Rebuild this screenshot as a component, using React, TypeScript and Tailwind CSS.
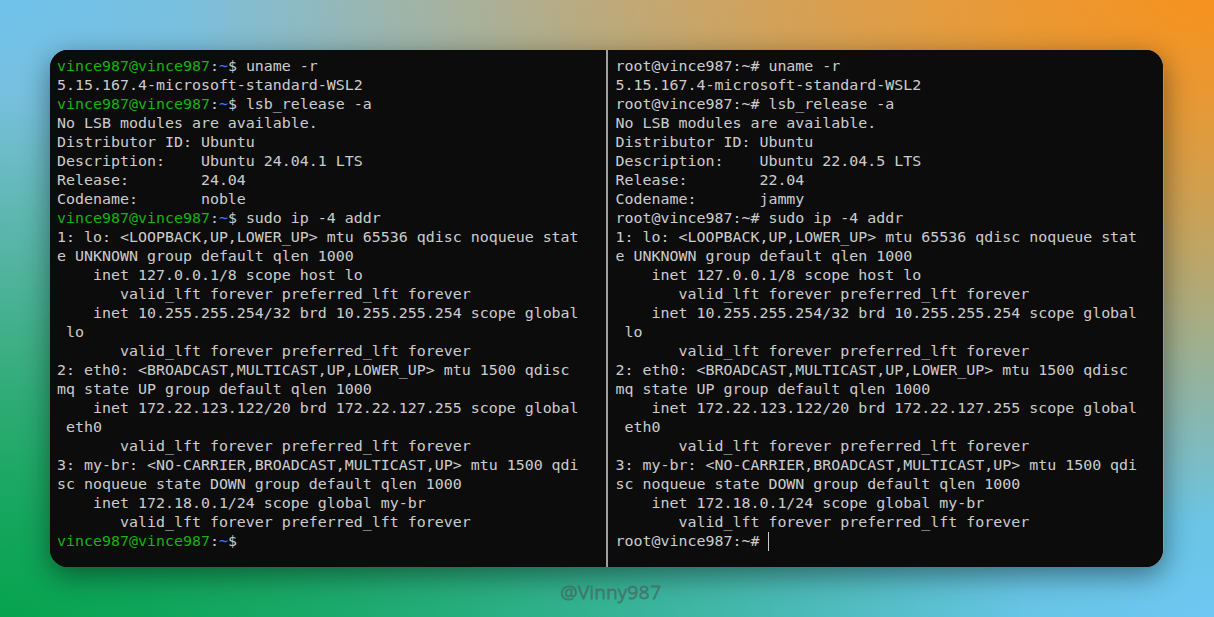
import React from "react";

type Seg = { t: string; c?: string };
type Line = Seg[];

const G = "text-[#16b30f]";
const B = "text-[#3b78ff]";

const userPrompt = (cmd: string): Line => [
  { t: "vince987@vince987", c: G },
  { t: ":" },
  { t: "~", c: B },
  { t: "$" + (cmd ? " " + cmd : "") },
];
const rootPrompt = (cmd: string): Line => [{ t: "root@vince987:~# " + cmd }];

const body = (ver: string, rel: string, code: string): Line[] =>
  [
    "No LSB modules are available.",
    "Distributor ID: Ubuntu",
    "Description:    Ubuntu " + ver,
    "Release:        " + rel,
    "Codename:       " + code,
  ].map((t) => [{ t }]);

const ipOut: Line[] = [
  "1: lo: <LOOPBACK,UP,LOWER_UP> mtu 65536 qdisc noqueue stat",
  "e UNKNOWN group default qlen 1000",
  "    inet 127.0.0.1/8 scope host lo",
  "       valid_lft forever preferred_lft forever",
  "    inet 10.255.255.254/32 brd 10.255.255.254 scope global",
  " lo",
  "       valid_lft forever preferred_lft forever",
  "2: eth0: <BROADCAST,MULTICAST,UP,LOWER_UP> mtu 1500 qdisc",
  "mq state UP group default qlen 1000",
  "    inet 172.22.123.122/20 brd 172.22.127.255 scope global",
  " eth0",
  "       valid_lft forever preferred_lft forever",
  "3: my-br: <NO-CARRIER,BROADCAST,MULTICAST,UP> mtu 1500 qdi",
  "sc noqueue state DOWN group default qlen 1000",
  "    inet 172.18.0.1/24 scope global my-br",
  "       valid_lft forever preferred_lft forever",
].map((t) => [{ t }]);

const leftLines: Line[] = [
  userPrompt("uname -r"),
  [{ t: "5.15.167.4-microsoft-standard-WSL2" }],
  userPrompt("lsb_release -a"),
  ...body("24.04.1 LTS", "24.04", "noble"),
  userPrompt("sudo ip -4 addr"),
  ...ipOut,
  userPrompt(""),
];

const rightLines: Line[] = [
  rootPrompt("uname -r"),
  [{ t: "5.15.167.4-microsoft-standard-WSL2" }],
  rootPrompt("lsb_release -a"),
  ...body("22.04.5 LTS", "22.04", "jammy"),
  rootPrompt("sudo ip -4 addr"),
  ...ipOut,
];

function Pane({ lines, cursor, pl }: { lines: Line[]; cursor?: boolean; pl: string }) {
  return (
    <div className={`flex-1 min-w-0 bg-[#0c0c0c] pt-[7px] ${pl}`}>
      {lines.map((l, i) => (
        <div key={i} className="whitespace-pre h-[19px] leading-[19px]">
          {l.map((s, j) => (
            <span key={j} className={s.c}>
              {s.t}
            </span>
          ))}
        </div>
      ))}
      {cursor && (
        <div className="whitespace-pre h-[19px] leading-[19px] flex items-center">
          <span>{"root@vince987:~# "}</span>
          <span className="inline-block w-px h-[19px] bg-[#cccccc]" />
        </div>
      )}
    </div>
  );
}

export default function App() {
  return (
    <div className="w-[1214px] h-[617px] flex flex-col px-[50px] pt-[50px] overflow-hidden bg-[radial-gradient(ellipse_at_100%_0%,#f6921e_0%,rgba(246,146,30,0.6)_25%,rgba(246,146,30,0)_60%),radial-gradient(ellipse_at_0%_100%,#07a34f_0%,rgba(7,163,79,0.6)_25%,rgba(7,163,79,0)_60%),radial-gradient(ellipse_at_100%_100%,#6ec7f2_0%,rgba(110,199,242,0.6)_30%,rgba(110,199,242,0)_60%),radial-gradient(ellipse_at_0%_0%,#6fc2ec_0%,rgba(111,194,236,0.6)_30%,rgba(111,194,236,0)_60%),linear-gradient(180deg,#b8b494,#3fb49c)]">
      <div className="h-[517px] shrink-0 flex rounded-[18px] overflow-hidden bg-[#0c0c0c] shadow-[0_8px_28px_rgba(0,0,0,0.45)] border-r border-[#9a9a9a] text-[#cccccc] font-['DejaVu_Sans_Mono',monospace] text-[14.95px]">
        <Pane lines={leftLines} pl="pl-[7px]" />
        <div className="w-[2px] bg-[#a0a0a0] shrink-0 ml-[1px]" />
        <Pane lines={rightLines} cursor pl="pl-[8px]" />
      </div>
      <div className="flex-1 flex items-center justify-center">
        <span className="font-['Noto_Sans',sans-serif] font-light text-[19px] tracking-[0.5px] text-transparent [-webkit-text-stroke:1px_rgba(70,100,92,0.7)] pl-[8px]">
          @Vinny987
        </span>
      </div>
    </div>
  );
}
